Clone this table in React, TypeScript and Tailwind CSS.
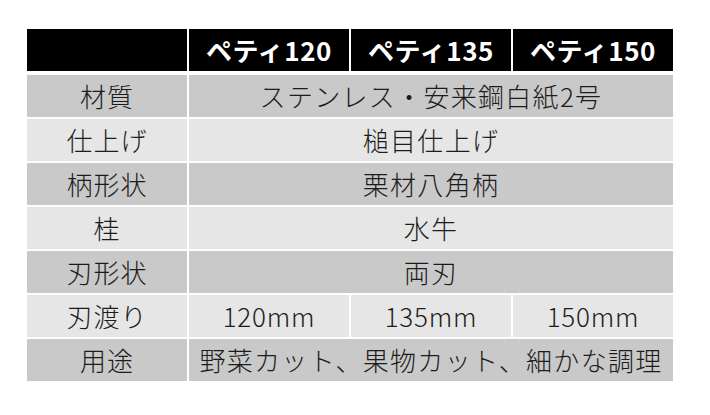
const headers = ["ペティ120", "ペティ135", "ペティ150"];

type Row = { label: string; values: string[]; tone: "dark" | "light" };

const rows: Row[] = [
  { label: "材質", values: ["ステンレス・安来鋼白紙2号"], tone: "dark" },
  { label: "仕上げ", values: ["槌目仕上げ"], tone: "light" },
  { label: "柄形状", values: ["栗材八角柄"], tone: "dark" },
  { label: "桂", values: ["水牛"], tone: "light" },
  { label: "刃形状", values: ["両刃"], tone: "dark" },
  { label: "刃渡り", values: ["120mm", "135mm", "150mm"], tone: "light" },
  { label: "用途", values: ["野菜カット、果物カット、細かな調理"], tone: "dark" },
];

export default function App() {
  return (
    <div
      className="w-[710px] h-[415px] bg-white pt-[29px] pl-[27px]"
      style={{ fontFamily: '"Noto Sans CJK JP", "Noto Sans", sans-serif' }}
    >
      <div className="w-[646px] grid grid-cols-4 gap-[2px]">
        {/* header */}
        <div className="h-[42px] bg-black mb-[2px]" />
        {headers.map((h) => (
          <div
            key={h}
            className="h-[42px] bg-black mb-[2px] flex items-center justify-center text-white text-[26px] font-bold tracking-[0.6px] leading-none"
          >
            {h}
          </div>
        ))}

        {rows.map((r) => {
          const bg = r.tone === "dark" ? "bg-[#c9c9c9]" : "bg-[#e6e6e6]";
          return [
            <div
              key={r.label}
              className={`h-[42px] ${bg} flex items-center justify-center text-[26px] font-light tracking-[1px] text-[#1c1c1c] leading-none`}
            >
              {r.label}
            </div>,
            ...(r.values.length === 1
              ? [
                  <div
                    key={r.label + "-v"}
                    className={`h-[42px] col-span-3 ${bg} flex items-center justify-center text-[26px] font-light tracking-[1.3px] text-[#1c1c1c] leading-none`}
                  >
                    {r.values[0]}
                  </div>,
                ]
              : r.values.map((v) => (
                  <div
                    key={r.label + v}
                    className={`h-[42px] ${bg} flex items-center justify-center text-[26px] font-light tracking-[0.8px] text-[#1c1c1c] leading-none`}
                  >
                    {v}
                  </div>
                ))),
          ];
        })}
      </div>
    </div>
  );
}
